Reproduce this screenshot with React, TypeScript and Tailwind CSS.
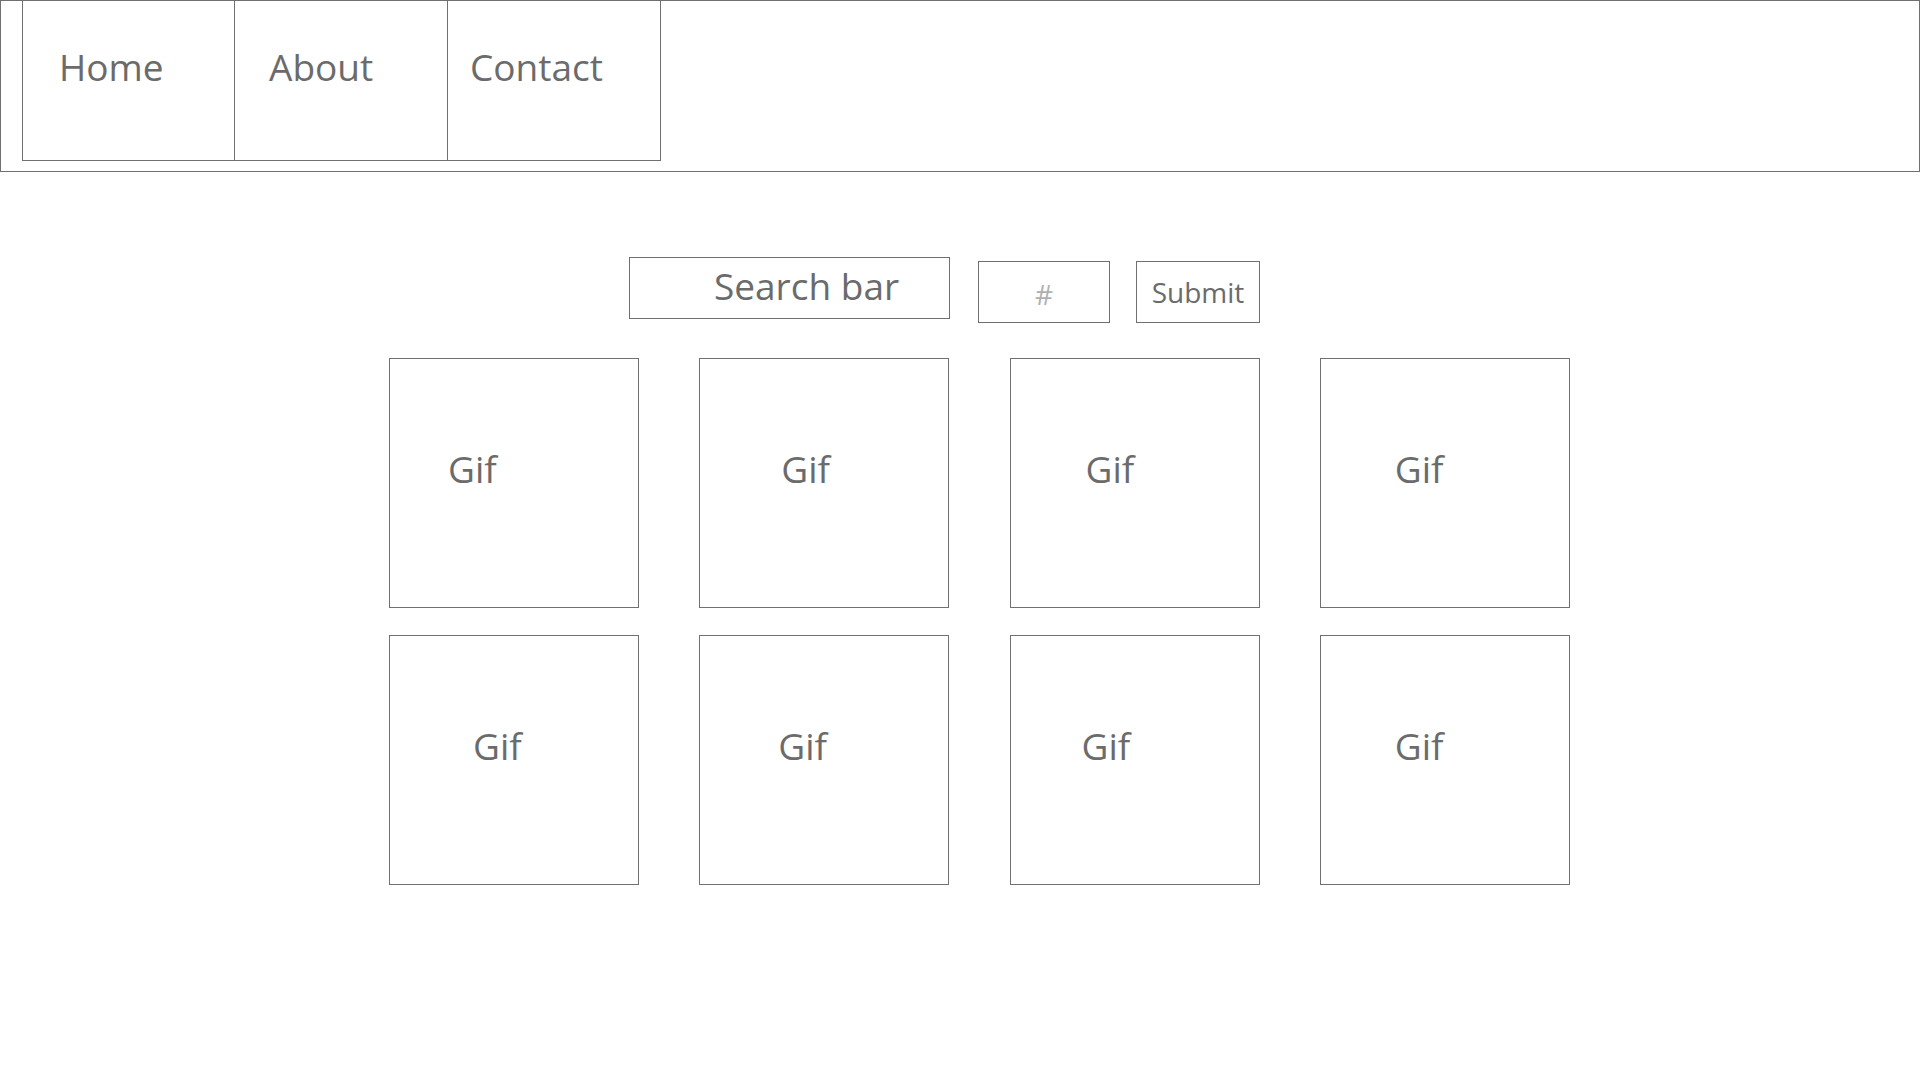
const navItems = [
  { label: 'Home', pad: 'pl-[36px]', edge: 'border-l' },
  { label: 'About', pad: 'pl-[34px]', edge: '' },
  { label: 'Contact', pad: 'pl-[22px]', edge: '' },
];

// offsets of the "Gif" label inside each box, as in the wireframe
const gifs = [
  'pl-[58px]',
  'pl-[81px]',
  'pl-[75px]',
  'pl-[74px]',
  'pl-[83px]',
  'pl-[78px]',
  'pl-[71px]',
  'pl-[74px]',
];

function Nav() {
  return (
    <nav className="h-[172px] w-full border border-[#707070]">
      <ul className="flex pl-[21px]">
        {navItems.map((item) => (
          <li
            key={item.label}
            className={`h-[160px] w-[213px] border-r border-b border-[#707070] ${item.edge} ${item.pad} pt-[47px] text-[37px] leading-none text-[#6b6b6b]`}
          >
            {item.label}
          </li>
        ))}
      </ul>
    </nav>
  );
}

function SearchRow() {
  return (
    <form className="flex items-start pl-[240px]" onSubmit={(e) => e.preventDefault()}>
      <div className="flex h-[62px] w-[321px] items-center border border-[#707070] pb-[5px] pl-[84px] text-[37px] leading-none text-[#6b6b6b]">
        Search bar
      </div>
      <div className="ml-[28px] mt-[4px] flex h-[62px] w-[132px] items-center justify-center border border-[#707070] pt-[4px] text-[28px] leading-none text-[#b0b0b0]">
        #
      </div>
      <button
        type="submit"
        className="ml-[26px] mt-[4px] flex h-[62px] w-[124px] items-center justify-center border border-[#707070] text-[28px] leading-none text-[#6b6b6b]"
      >
        Submit
      </button>
    </form>
  );
}

export default function App() {
  return (
    <div className="min-h-screen bg-white font-['Open_Sans',_'Noto_Sans',_sans-serif]">
      <Nav />
      <main className="flex flex-col pl-[389px] pt-[85px]">
        <SearchRow />
        <div className="mt-[35px] grid w-[1181px] grid-cols-4 gap-x-[60px] gap-y-[27px]">
          {gifs.map((pad, i) => (
            <div
              key={i}
              className={`h-[250px] w-[250px] border border-[#707070] ${pad} pt-[91px] text-[37px] leading-none text-[#6b6b6b]`}
            >
              Gif
            </div>
          ))}
        </div>
      </main>
    </div>
  );
}
